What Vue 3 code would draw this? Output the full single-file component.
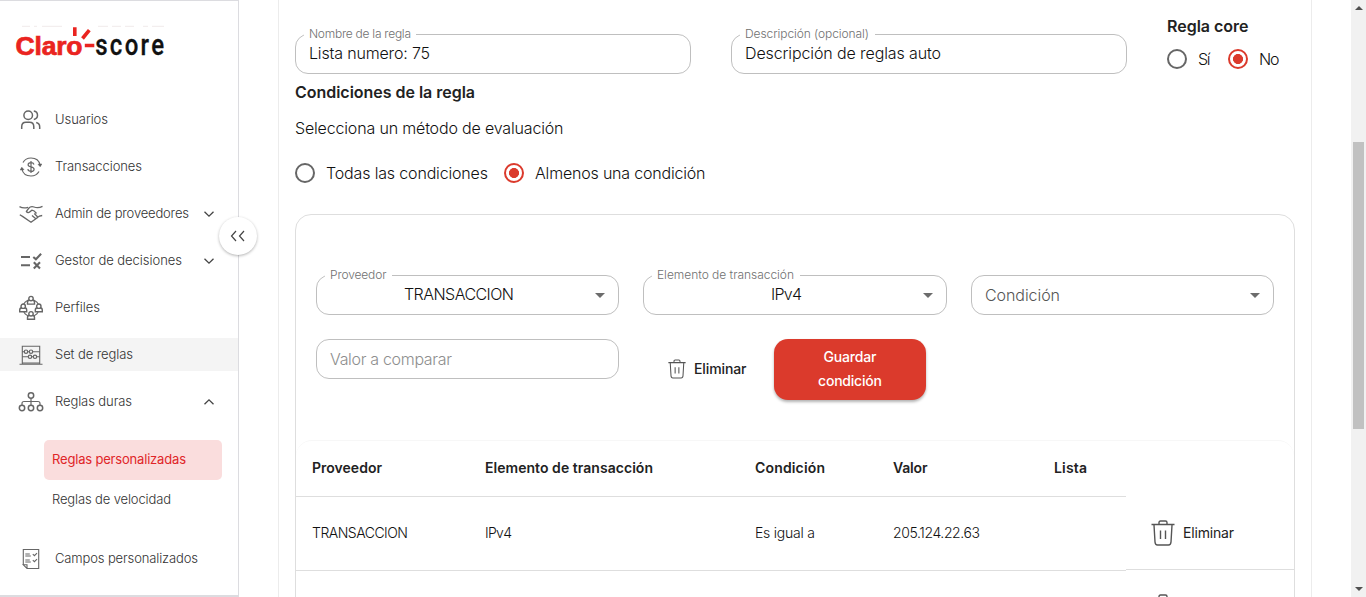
<script setup>
const menu = [
  { id: 'users', label: 'Usuarios', w: 53 },
  { id: 'money', label: 'Transacciones', w: 87 },
  { id: 'hands', label: 'Admin de proveedores', w: 134, chevron: 'down' },
  { id: 'rules', label: 'Gestor de decisiones', w: 127, chevron: 'down' },
  { id: 'group', label: 'Perfiles', w: 45 },
  { id: 'abacus', label: 'Set de reglas', w: 78, active: true },
  { id: 'tree', label: 'Reglas duras', w: 77, chevron: 'up' },
]
const heads = ['Proveedor', 'Elemento de transacción', 'Condición', 'Valor', 'Lista']
const row = ['TRANSACCION', 'IPv4', 'Es igual a', '205.124.22.63', '']
const people = [[12, -0.4], [4.2, 7.2], [19.8, 7.2], [12, 14.8]]
</script>

<template>
  <div class="page">
    <aside class="side">
      <svg class="logo" width="160" height="36" viewBox="0 0 160 36">
        <path d="M12 1.300h8m4 0h3m5 0h20M88 1.300h10m4 0h9m4 0h9m9 0h5m4 0h12" stroke="#f3eeee" stroke-width="1.200" fill="none" />
        <text x="5.500" y="29.500" class="claro" textLength="67">Claro</text>
        <path d="M64.800 2.300v8.700M72.500 13.500l6.800-8.300M74.800 20.500h9.500" stroke="#ea2420" stroke-width="3.600" fill="none" />
        <text transform="translate(85.200 29.500) scale(.8 1)" class="score" textLength="86">score</text>
      </svg>

      <nav class="menu">
        <div v-for="m in menu" :key="m.id" class="item" :class="{ active: m.active }">
          <svg class="ico" width="24" height="24" viewBox="0 0 24 24">
            <template v-if="m.id === 'users'">
              <circle cx="9.200" cy="7.200" r="4.300" />
              <path d="M2.700 21v-2.300c0-2.800 1.700-4.400 4.200-4.400h3.700c2.600 0 4.200 1.600 4.200 4.400V21M14.800 3c2.500.4 3.700 2 3.700 4.200s-1.200 3.800-3.700 4.200M17.200 14.600c2.400.6 3.500 2.200 3.500 4.400v2" />
            </template>
            <template v-else-if="m.id === 'money'">
              <path d="M4 7.500C5.600 4.700 8.600 3 12 3c4.600 0 8.200 2.700 9.100 7M20 16.500C18.400 19.300 15.400 21 12 21c-4.600 0-8.200-2.700-9.100-7" stroke-width="1.200" />
              <path d="M19 9.300l2.200 2.400L22.800 9zM5 14.700l-2.200-2.400L1.200 15z" fill="#555" stroke-width=".6" />
              <path d="M15 9.500c-.4-1.300-1.400-1.900-3-1.900-1.700 0-2.900.8-2.900 2.100 0 3 6 1.400 6 4.500 0 1.400-1.200 2.200-3 2.200s-3-.8-3.300-2.200M12 6v12" stroke-width="1.200" />
            </template>
            <template v-else-if="m.id === 'hands'">
              <path d="M.5 4.600c3 1.700 5.800 1.500 8.500.7M23.500 4.300c-3 1.500-5.700 1.600-8.500.7-2.500-.8-4-.2-5.300 1.300L7.400 9.400c.8 1.600 2.800 1.500 4.200-.1l1.300-1.100c2 .2 3.300 1.600 4.600 3.300M.8 12.800l2.700 1.600M23.200 13.500c-1.900.2-3.400.6-4.600 1.900L12 20.300l-8.500-5.900M13 13.500l3.500 3M15.300 11.500l3.400 3.500" stroke-width="1.300" />
            </template>
            <template v-else-if="m.id === 'rules'">
              <path d="M2 8h9M2 16.200h9" stroke-width="1.900" />
              <path d="M14.300 8l2.600 2.300 5.200-5.500M14.800 13.200l6.200 6.200M21 13.200l-6.200 6.200" stroke-width="2.100" />
            </template>
            <template v-else-if="m.id === 'group'">
              <circle cx="12" cy="12" r="8.300" stroke-width="1.200" />
              <g v-for="(p, i) in people" :key="i" :transform="`translate(${p[0]} ${p[1]})`">
                <path d="M-3.500 8.500V7c0-1.500 1-2.500 2.200-2.500h2.600c1.200 0 2.200 1 2.200 2.500v1.500z" fill="#fff" stroke-width="1.400" />
                <circle cx="0" cy="3" r="2.200" fill="#fff" stroke-width="1.400" />
              </g>
            </template>
            <template v-else-if="m.id === 'abacus'">
              <path d="M.5 21.300h23M3.300 21V3.300h17.400V21M3.300 8.700h17.400M3.300 13.800h17.400M3.300 20h17.400" stroke-width="1.100" />
              <g fill="#f4f4f4" stroke-width="1.200">
                <circle cx="7" cy="8.700" r="1.700" /><circle cx="12" cy="8.700" r="1.700" />
                <circle cx="11" cy="13.800" r="1.700" /><circle cx="16" cy="13.800" r="1.700" />
              </g>
            </template>
            <template v-else>
              <circle cx="12" cy="5.500" r="2.700" /><circle cx="3" cy="18" r="2.700" /><circle cx="12" cy="18" r="2.700" /><circle cx="21" cy="18" r="2.700" />
              <path d="M12 8.200v7M3 15v-1.500q0-2 2-2h14q2 0 2 2V15" stroke-width="1.200" />
            </template>
          </svg>
          <svg class="label" :width="m.w + 4" height="20"><text x="0" y="13.500" :textLength="m.w">{{ m.label }}</text></svg>
          <svg v-if="m.chevron" class="chev" width="12" height="8" viewBox="0 0 12 8">
            <path :d="m.chevron === 'down' ? 'M1.500 1.700L6 6.200l4.500-4.500' : 'M1.500 6.300L6 1.800l4.500 4.500'" />
          </svg>
        </div>
      </nav>

      <div class="sub on"><svg width="140" height="20"><text x="0" y="13.500" textLength="134">Reglas personalizadas</text></svg></div>
      <div class="sub"><svg width="140" height="20"><text x="0" y="13.500" textLength="119">Reglas de velocidad</text></svg></div>

      <div class="item last">
        <svg class="ico" width="24" height="24" viewBox="0 0 24 24">
          <path d="M4.300 17.800V2.500h15.400v19H8L4.300 17.800H8v3.700M6.300 7h4.500M6.300 9h5.500M6.300 13h4.500M6.300 15h5.500M13.800 7.200l1.600 1.500 2.600-2.600M13.800 13.200l1.600 1.500 2.600-2.600" stroke-width="1.100" />
        </svg>
        <svg class="label" width="150" height="20"><text x="0" y="13.500" textLength="143">Campos personalizados</text></svg>
      </div>

      <button class="collapse">
        <svg width="16" height="12" viewBox="0 0 16 12"><path d="M6 1L1.500 6 6 11M14 1L9.500 6l4.500 5" /></svg>
      </button>
    </aside>

    <main class="card">
      <section class="top">
        <div class="field wide">
          <span class="tag"><svg width="102" height="16"><text y="12" textLength="102">Nombre de la regla</text></svg></span>
          <svg class="val" width="130" height="22"><text y="16.500" textLength="121">Lista numero: 75</text></svg>
        </div>
        <div class="field wide">
          <span class="tag"><svg width="125" height="16"><text y="12" textLength="124">Descripción (opcional)</text></svg></span>
          <svg class="val" width="210" height="22"><text y="16.500" textLength="196">Descripción de reglas auto</text></svg>
        </div>
        <div class="core">
          <svg class="bold" width="90" height="22"><text y="16.500" textLength="81.500">Regla core</text></svg>
          <div class="radios">
            <i class="radio"></i><svg class="rt" width="20" height="22"><text y="16.500" textLength="12.500">Sí</text></svg>
            <i class="radio sel"></i><svg class="rt" width="24" height="22"><text y="16.500" textLength="20.500">No</text></svg>
          </div>
        </div>
      </section>

      <svg class="bold title" width="200" height="22"><text y="16.500" textLength="180">Condiciones de la regla</text></svg>
      <svg class="plain" width="280" height="22"><text y="16.500" textLength="268.500">Selecciona un método de evaluación</text></svg>
      <div class="radios method">
        <i class="radio"></i><svg class="rt" width="168" height="22"><text y="16.500" textLength="162">Todas las condiciones</text></svg>
        <i class="radio sel"></i><svg class="rt" width="175" height="22"><text y="16.500" textLength="170.500">Almenos una condición</text></svg>
      </div>

      <section class="box">
        <div class="grid">
          <div class="field sel1">
            <span class="tag"><svg width="57" height="16"><text y="12" textLength="56.500">Proveedor</text></svg></span>
            <svg class="val" width="110" height="22"><text y="16.500" textLength="110">TRANSACCION</text></svg>
            <b class="caret"></b>
          </div>
          <div class="field sel1">
            <span class="tag"><svg width="138" height="16"><text y="12" textLength="137">Elemento de transacción</text></svg></span>
            <svg class="val" width="31" height="22"><text y="16.500" textLength="31">IPv4</text></svg>
            <b class="caret"></b>
          </div>
          <div class="field cond">
            <svg class="val" width="90" height="22"><text y="16.500" textLength="75">Condición</text></svg>
            <b class="caret"></b>
          </div>
          <div class="field ph">
            <svg class="val" width="140" height="22"><text y="16.500" textLength="122">Valor a comparar</text></svg>
          </div>
          <div class="actions">
            <div class="del">
              <svg width="18" height="20" viewBox="0 0 24 26"><path d="M.5 4.500h23M8 4.300V2.500q0-1.500 1.500-1.500h5Q16 1 16 2.500v1.800M3 5l1 17q.2 3 2.500 3h11q2.300 0 2.500-3L21 5M9.500 10.500v8.500M14.500 10.500v8.500" /></svg>
              <svg class="med" width="56" height="20"><text y="14.500" textLength="52.500">Eliminar</text></svg>
            </div>
            <button class="save">
              <svg width="56" height="24"><text x="28" y="16.500" text-anchor="middle" textLength="53">Guardar</text></svg>
              <svg width="70" height="24"><text x="35" y="16.500" text-anchor="middle" textLength="64">condición</text></svg>
            </button>
          </div>
        </div>

        <div class="table">
          <div class="tr head">
            <div v-for="(h, i) in heads" :key="h" class="td">
              <svg width="175" height="20"><text y="13.500" :textLength="[70, 168, 70, 34.5, 33][i]">{{ h }}</text></svg>
            </div>
            <div></div>
          </div>
          <div class="tr body">
            <div v-for="(c, i) in row" :key="i" class="td">
              <svg v-if="c" width="110" height="20"><text y="13.500" :textLength="[96, 27, 60, 87][i]">{{ c }}</text></svg>
            </div>
            <div class="act">
              <svg class="bin" width="24" height="26" viewBox="0 0 24 26"><path d="M.5 4.500h23M8 4.300V2.500q0-1.500 1.500-1.500h5Q16 1 16 2.500v1.800M3 5l1 17q.2 3 2.500 3h11q2.300 0 2.500-3L21 5M9.500 10.500v8.500M14.500 10.500v8.500" /></svg>
              <svg class="el" width="56" height="20"><text y="14.500" textLength="51">Eliminar</text></svg>
            </div>
          </div>
          <div class="tr body">
            <div v-for="n in 5" :key="n"></div>
            <div class="act">
              <svg class="bin" width="24" height="26" viewBox="0 0 24 26"><path d="M.5 4.500h23M8 4.300V2.500q0-1.500 1.500-1.500h5Q16 1 16 2.500v1.800" /></svg>
            </div>
          </div>
        </div>
      </section>
    </main>

    <div class="scroll"><i class="up"></i><i class="thumb"></i><i class="down"></i></div>
  </div>
</template>

<style>
body { background: #fff; overflow: hidden; }
</style>

<style scoped>
* { box-sizing: border-box; }
.page { display: flex; height: 597px; overflow: hidden; background: #fff; font-family: Inter, "Open Sans", sans-serif; font-weight: 300; color: #222; }
svg { display: block; flex: none; overflow: visible; }
.side { position: relative; width: 239px; height: 597px; border: solid #dcdce0; border-width: 1px 1px 2px 0; flex: none; }
.logo { margin: 24px 0 0 10px; }
.claro { font: bold 26.5px "Liberation Sans", sans-serif; fill: #ea2420; stroke: #ea2420; stroke-width: .7; }
.score { font: 500 30px Roboto, sans-serif; fill: #111; stroke: #111; stroke-width: .3; }
.menu { display: flex; flex-direction: column; gap: 14px; margin-top: 42px; }
.item { display: flex; align-items: center; height: 33px; padding-left: 19px; }
.item.active { background: #f4f4f4; }
.ico { fill: none; stroke: #666; stroke-width: 1.5; }
.label { margin-left: 12px; }
.item text, .sub text { font-size: 13px; fill: #333; font-weight: 300; }
.chev { margin-left: auto; margin-right: 23px; fill: none; stroke: #444; stroke-width: 1.3; }
.sub { display: flex; align-items: center; width: 178px; height: 40px; margin-left: 44px; padding-left: 8px; border-radius: 5px; }
.sub.on { margin-top: 22px; background: #fadddd; }
.sub.on text { fill: #e02528; font-weight: 400; }
.last { margin-top: 22px; }
.collapse { position: absolute; left: 219px; top: 216px; width: 38px; height: 38px; padding: 0; border: 0; border-radius: 50%; background: #fff; box-shadow: 0 1px 3px rgba(0,0,0,.3); display: flex; align-items: center; justify-content: center; z-index: 2; }
.collapse path { fill: none; stroke: #444; stroke-width: 1.2; }
.card { width: 1034px; height: 597px; margin-left: 39px; padding: 0 16px; border: solid #ececec; border-width: 0 1px; flex: none; }
.top { display: flex; gap: 40px; height: 82px; }
.field { position: relative; display: flex; align-items: center; height: 40px; border: 1px solid #bfbfbf; border-radius: 13px; padding-left: 13px; }
.wide { width: 396px; margin-top: 34px; }
.wide .val { margin-top: -3px; }
.field text, .plain text, .rt text { font-size: 16px; font-weight: 300; fill: #111; }
.tag { position: absolute; left: 8px; top: -9px; height: 16px; padding: 0 5px; background: #fff; }
.field .tag text { font-size: 12px; fill: #707070; }
.core { padding-top: 15px; }
.bold text { font-size: 16px; font-weight: 600; fill: #222; }
.radios { display: flex; align-items: center; margin-top: 11px; }
.radio { width: 20px; height: 20px; border: 2px solid #666; border-radius: 50%; flex: none; }
.rt { margin: 0 0 0 10.5px; }
.core .sel { margin-left: 10.5px; }
.sel { border-color: #db3a2c; background: radial-gradient(circle, #db3a2c 4.7px, transparent 5.3px); }
.title { margin-top: -1px; }
.plain { margin-top: 14px; }
.method { margin-top: 23px; }
.method .sel { margin-left: 10.5px; }
.box { width: 1000px; height: 400px; margin-top: 30px; border: 1px solid #dedede; border-radius: 16px; }
.grid { display: grid; grid-template-columns: 303px 304px 303px; gap: 24px; padding: 60px 20px 0; }
.sel1 { justify-content: center; padding: 0 18px 0 0; }
.sel1 .val { margin-top: -2px; }
.cond .val text { fill: #555; }
.ph .val text { fill: #8e8e8e; }
.caret { position: absolute; right: 13px; top: 17px; border: solid transparent; border-width: 5px 5px 0; border-top-color: #6c6c6c; }
.actions { grid-column: 2 / 4; display: flex; height: 62px; padding-left: 25px; }
.del { display: flex; align-items: center; gap: 8px; width: 106px; height: 60px; }
.del path, .bin path { fill: none; stroke: #555; stroke-width: 1.4; }
.bin { margin-top: -1px; }
.med text { font-size: 14px; font-weight: 500; fill: #222; }
.save { width: 152px; height: 61px; padding: 0 0 1px; border: 0; border-radius: 14px; background: #db3a2c; box-shadow: 0 2px 3px rgba(0,0,0,.3); display: flex; flex-direction: column; align-items: center; justify-content: center; font-family: inherit; }
.save text { font-size: 14px; font-weight: 500; fill: #fff; }
.table { margin-top: 39px; border: solid #f7f7f7; border-width: 1px 0 0; border-radius: 16px 16px 0 0; }
.tr { display: grid; grid-template-columns: 173px 270px 138px 161px 88px 168px; }
.td { display: flex; align-items: center; padding-left: 16px; border-bottom: 1px solid #dedede; }
.head { height: 56px; }
.head text { font-size: 14px; font-weight: 600; fill: #222; }
.body { height: 74px; }
.body text { font-size: 14px; font-weight: 300; fill: #111; }
.body .el text { font-weight: 400; fill: #222; }
.act { display: flex; align-items: center; height: 73px; padding-left: 25px; border-bottom: 1px solid #dedede; }
.el { margin-left: 8px; }
.scroll { position: relative; width: 15px; height: 597px; margin-left: auto; background: #f1f1f1; flex: none; }
.scroll i { position: absolute; }
.thumb { left: 2px; top: 142px; width: 11px; height: 287px; background: #c1c1c1; }
.up, .down { left: 4px; border: solid transparent; }
.up { top: 6px; border-width: 0 4px 4px; border-bottom-color: #505050; }
.down { bottom: 6px; border-width: 4px 4px 0; border-top-color: #505050; }
</style>
